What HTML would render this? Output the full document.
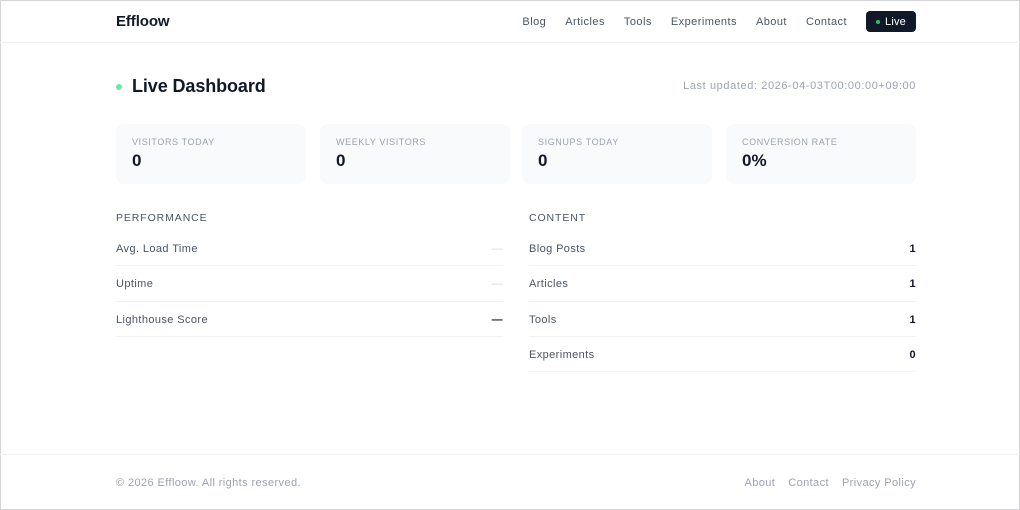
<!DOCTYPE html>
<html><head><meta charset="utf-8"><style>
*{box-sizing:border-box;margin:0;padding:0}
html,body{width:1020px;height:510px;overflow:hidden;background:#fff;font-family:"Liberation Sans",sans-serif;color:#111827}
.frame{position:absolute;inset:0;border:1px solid #d4d4d8}
.hdr{position:absolute;left:0;right:0;top:0;height:43px;border-bottom:1px solid #f0f1f3}
.logo{position:absolute;left:116px;top:13px;font-weight:700;font-size:15px;letter-spacing:-0.1px}
.nav{position:absolute;right:104px;top:11px;display:flex;align-items:center;font-size:11px;color:#4b5563;letter-spacing:0.45px}
.nav span{margin-right:19px}
.live{background:#111827;color:#fff;border-radius:4px;height:21px;width:50px;display:flex;align-items:center;justify-content:center;font-size:11px;margin-right:0!important;letter-spacing:0.2px}
.live i{width:4px;height:4px;border-radius:50%;background:#22c55e;display:inline-block;margin-right:5px}
.title{position:absolute;left:116px;top:76px;display:flex;align-items:center;font-size:18px;font-weight:700;letter-spacing:-0.1px}
.title i{width:6px;height:6px;border-radius:50%;background:#6ee7a0;margin-right:10px}
.upd{position:absolute;right:104px;top:80px;font-size:11px;color:#9ca3af;letter-spacing:0.6px}
.card{position:absolute;top:124px;width:190px;height:60px;background:#f8fafb;border-radius:8px;padding:13px 16px}
.card .l{font-size:9px;color:#9ca3af;letter-spacing:0.6px}
.card .v{font-size:17px;font-weight:700;margin-top:4px}
.sec{position:absolute;top:212px;width:387px}
.sec h4{font-size:10.5px;font-weight:400;color:#4b5563;letter-spacing:0.9px;height:19px}
.row{height:35.3px;display:flex;justify-content:space-between;align-items:center;font-size:11px;color:#4b5563;border-bottom:1px solid #f1f2f4;padding-top:2px;letter-spacing:0.4px}
.row b{font-weight:700;color:#111827}
.row .d{color:#d1d5db}
.ftr{position:absolute;left:0;right:0;top:454px;border-top:1px solid #f0f1f3}
.copy{position:absolute;left:116px;top:477px;font-size:11px;color:#9ca3af;letter-spacing:0.4px}
.fl{position:absolute;right:104px;top:477px;font-size:11px;color:#9ca3af;letter-spacing:0.4px}
.fl span{margin-left:13px}
</style></head><body>
<div class="frame"></div>
<div class="hdr"></div>
<div class="logo">Effloow</div>
<div class="nav"><span>Blog</span><span>Articles</span><span>Tools</span><span>Experiments</span><span>About</span><span>Contact</span><span class="live"><i></i>Live</span></div>
<div class="title"><i></i>Live Dashboard</div>
<div class="upd">Last updated: 2026-04-03T00:00:00+09:00</div>
<div class="card" style="left:116px"><div class="l">VISITORS TODAY</div><div class="v">0</div></div>
<div class="card" style="left:320px"><div class="l">WEEKLY VISITORS</div><div class="v">0</div></div>
<div class="card" style="left:522px"><div class="l">SIGNUPS TODAY</div><div class="v">0</div></div>
<div class="card" style="left:726px"><div class="l">CONVERSION RATE</div><div class="v">0%</div></div>
<div class="sec" style="left:116px"><h4>PERFORMANCE</h4>
<div class="row"><span>Avg. Load Time</span><span class="d">—</span></div>
<div class="row"><span>Uptime</span><span class="d">—</span></div>
<div class="row"><span>Lighthouse Score</span><b>—</b></div>
</div>
<div class="sec" style="left:529px"><h4>CONTENT</h4>
<div class="row"><span>Blog Posts</span><b>1</b></div>
<div class="row"><span>Articles</span><b>1</b></div>
<div class="row"><span>Tools</span><b>1</b></div>
<div class="row"><span>Experiments</span><b>0</b></div>
</div>
<div class="ftr"></div>
<div class="copy">© 2026 Effloow. All rights reserved.</div>
<div class="fl"><span>About</span><span>Contact</span><span>Privacy Policy</span></div>
</body></html>
